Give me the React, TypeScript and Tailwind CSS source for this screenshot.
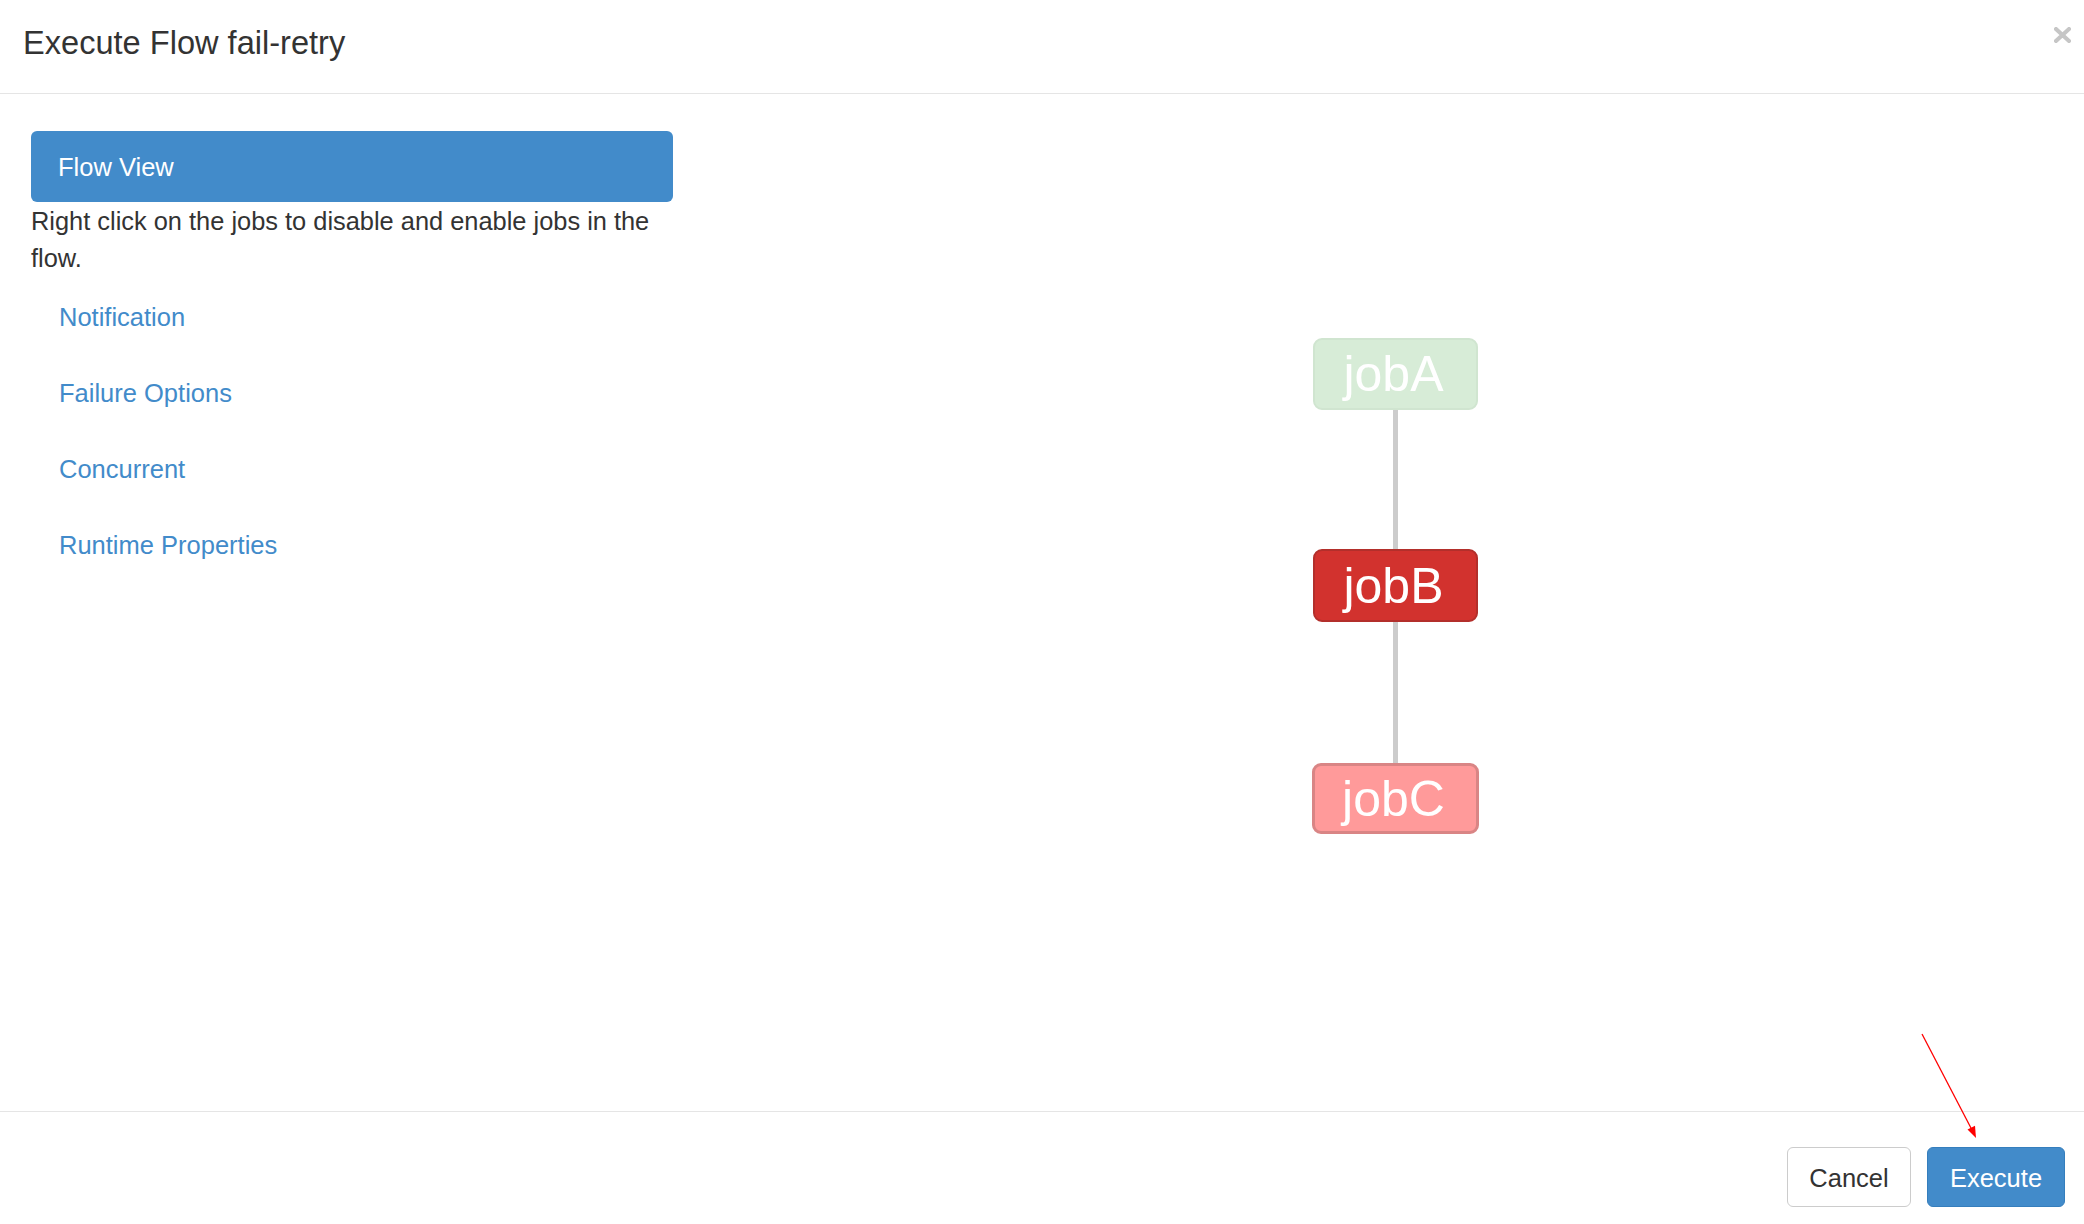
const navLinks = ['Notification', 'Failure Options', 'Concurrent', 'Runtime Properties'];

type Job = {
  name: string;
  box: string;
  height: string;
};

const jobs: Job[] = [
  { name: 'jobA', box: 'w-[165px] bg-[#d7ecd7] border-2 border-[#d0e5d0]', height: 'h-[72px]' },
  { name: 'jobB', box: 'w-[165px] bg-[#d2322e] border-2 border-[#b32f2b]', height: 'h-[73px]' },
  { name: 'jobC', box: 'w-[167px] bg-[#ff9a9a] border-[3px] border-[#d98585]', height: 'h-[71px]' },
];

const connectors = ['h-[139px]', 'h-[141px]'];

function JobNode({ job }: { job: Job }) {
  return (
    <div
      className={`${job.box} ${job.height} rounded-[9px] flex items-center justify-center pr-[4px] text-white text-[50px] leading-none`}
    >
      {job.name}
    </div>
  );
}

export default function App() {
  return (
    <div className="relative w-[2084px] h-[1224px] bg-white flex flex-col font-['Liberation_Sans',Arial,sans-serif] text-[#333333] overflow-hidden">
      {/* header */}
      <header className="h-[94px] shrink-0 border-b border-[#e5e5e5] flex justify-between">
        <h4 className="pl-[23px] pt-[20px] text-[32.6px] leading-[45px] font-normal">Execute Flow fail-retry</h4>
        <button className="mt-[27px] mr-[13px] h-[16px] w-[17px]" aria-label="Close">
          <svg viewBox="0 0 17 16" className="w-[17px] h-[16px]">
            <path d="M2 2 L15 14 M15 2 L2 14" stroke="#c6c6c6" strokeWidth="4" strokeLinecap="square" />
          </svg>
        </button>
      </header>

      {/* body */}
      <main className="flex-1 flex">
        <div className="ml-[31px] w-[642px] pt-[37px]">
          <div className="h-[71px] rounded-[6px] bg-[#428bca] text-white text-[25.5px] flex items-center pl-[27px] pt-[2px]">
            Flow View
          </div>
          <p className="text-[25.4px] leading-[37px] pt-[1px] pr-[2px]">
            Right click on the jobs to disable and enable jobs in the flow.
          </p>
          <ul className="flex flex-col">
            {navLinks.map((link) => (
              <li key={link} className="mt-[3px] h-[73px] flex items-center pl-[28px] pt-[1px]">
                <a href="#" className="text-[25.5px] text-[#428bca]">
                  {link}
                </a>
              </li>
            ))}
          </ul>
        </div>

        <div className="ml-[639px] pt-[244px] w-[167px] flex flex-col items-center">
          {jobs.map((job, i) => (
            <div key={job.name} className="flex flex-col items-center">
              <JobNode job={job} />
              {i < connectors.length && <div className={`${connectors[i]} w-[5px] bg-[#cccccc]`} />}
            </div>
          ))}
        </div>
      </main>

      {/* footer */}
      <footer className="h-[113px] shrink-0 border-t border-[#e5e5e5] flex justify-end items-start pt-[35px] pr-[19px] gap-[16px]">
        <button className="h-[60px] w-[124px] pt-[2px] rounded-[6px] border border-[#cccccc] bg-white text-[25.5px] text-[#333333]">
          Cancel
        </button>
        <button className="h-[60px] w-[138px] pt-[2px] rounded-[6px] border border-[#357ebd] bg-[#428bca] text-[25.5px] text-white">
          Execute
        </button>
      </footer>

      {/* red annotation arrow */}
      <svg className="absolute inset-0 pointer-events-none" width="2084" height="1224">
        <line x1="1922" y1="1034" x2="1972" y2="1130" stroke="#ff0000" strokeWidth="1.3" />
        <polygon points="1976,1138 1967.5,1129.5 1975,1125.8" fill="#ff0000" />
      </svg>
    </div>
  );
}
